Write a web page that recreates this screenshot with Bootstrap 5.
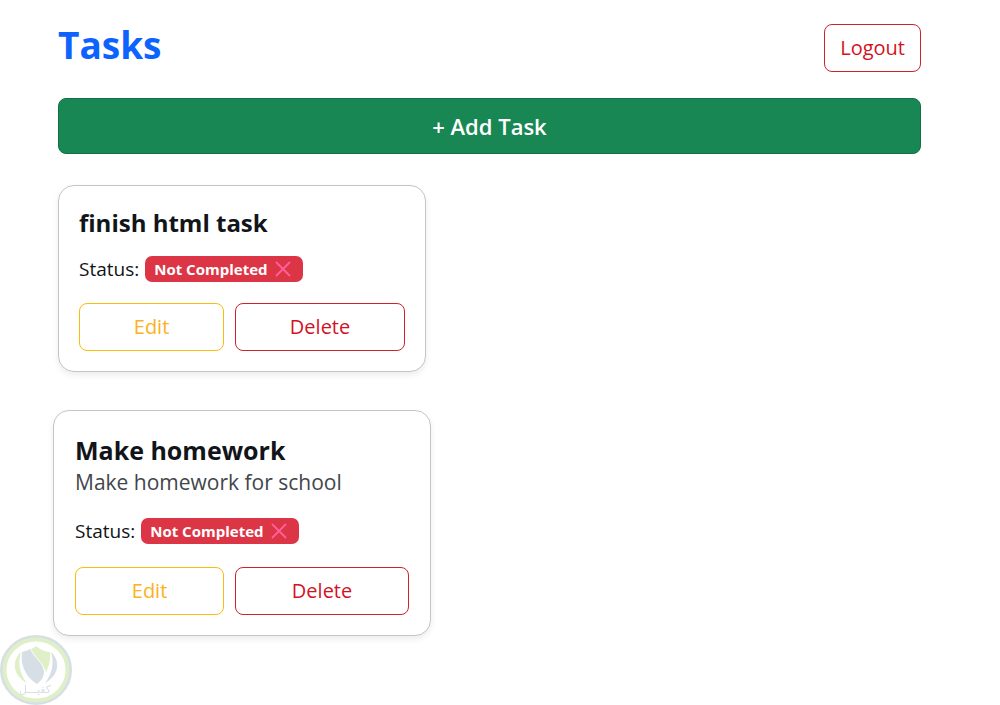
<!DOCTYPE html>
<html lang="en">
<head>
<meta charset="utf-8">
<meta name="viewport" content="width=device-width, initial-scale=1">
<title>Tasks</title>
<link href="https://cdn.jsdelivr.net/npm/bootstrap@5.3.0/dist/css/bootstrap.min.css" rel="stylesheet">
<style>
  body { font-family: "Open Sans", "Noto Sans", sans-serif; font-size: 20px; line-height: 30px; color: #111418; background: #fff; }
  .page { padding: 24px 79px 24px 58px; }
  .page-title { font-size: 37px; line-height: 42px; color: #0d63fd; }
  .btn { --bs-btn-font-size: 20px; --bs-btn-line-height: 30px; --bs-btn-padding-y: 8px; --bs-btn-padding-x: 15px; --bs-btn-border-radius: 8px; }
  .btn-outline-danger { --bs-btn-color: #d3121f; --bs-btn-border-color: #d3202d; }
  .btn-outline-warning { --bs-btn-color: #fdb11c; --bs-btn-border-color: #fdbb10; }
  .btn-success { --bs-btn-bg: #198754; --bs-btn-border-color: #0c7440; --bs-btn-padding-y: 12px; --bs-btn-font-size: 22px; }
  .add-task { margin: 26px 0 31px; }
  .task-list { gap: 38px; }
  .task { width: 368px; max-width: 100%; padding: 20px; border: 1px solid #c4c5c7; border-radius: 16px; box-shadow: 0 3px 6px rgba(0,0,0,.08); }
  .task-title { font-size: 24px; line-height: 34px; }
  .task-text { font-size: 21px; color: #41464c; }
  .task-status { font-size: 19px; margin: 14px 0 19px; gap: 6px; }
  .task-actions { gap: 11px; }
  .status-badge { font-size: 15px; line-height: 16px; gap: 7px; padding: 5px 12px 5px 9px; border-radius: 7px; background: #dc3545; }
  .status-badge svg { width: 16px; height: 16px; }
  .task-raised { width: 378px; margin-left: -5px; padding: 22px 21px 20px; }
  .task-raised .task-title { font-size: 25px; }
  .task-raised .task-status { margin: 19px 0 21px; }
  .watermark { position: fixed; left: 0; bottom: 0; width: 72px; height: 70px; }
</style>
</head>
<body>
<main class="page">
  <header class="d-flex justify-content-between align-items-start">
    <h1 class="page-title fw-bold mb-0">Tasks</h1>
    <button type="button" class="btn btn-outline-danger">Logout</button>
  </header>
  <button type="button" class="btn btn-success w-100 fw-semibold add-task">+ Add Task</button>
  <section class="task-list d-flex flex-column align-items-start">
    <article class="task bg-white">
      <h2 class="task-title fw-bold mb-0">finish html task</h2>
      <p class="task-status d-flex align-items-center">Status:
        <span class="status-badge d-inline-flex align-items-center text-white fw-bold">Not Completed
          <svg viewBox="0 0 16 16" aria-hidden="true"><path d="M1.5 1.5 14.5 14.5M14.5 1.5 1.5 14.5" fill="none" stroke="#ff609c" stroke-width="1.8" stroke-linecap="round"/></svg>
        </span>
      </p>
      <div class="d-flex task-actions">
        <button type="button" class="btn btn-outline-warning flex-fill">Edit</button>
        <button type="button" class="btn btn-outline-danger flex-fill">Delete</button>
      </div>
    </article>
    <article class="task task-raised bg-white">
      <h2 class="task-title fw-bold mb-0">Make homework</h2>
      <p class="task-text mb-0">Make homework for school</p>
      <p class="task-status d-flex align-items-center">Status:
        <span class="status-badge d-inline-flex align-items-center text-white fw-bold">Not Completed
          <svg viewBox="0 0 16 16" aria-hidden="true"><path d="M1.5 1.5 14.5 14.5M14.5 1.5 1.5 14.5" fill="none" stroke="#ff609c" stroke-width="1.8" stroke-linecap="round"/></svg>
        </span>
      </p>
      <div class="d-flex task-actions">
        <button type="button" class="btn btn-outline-warning flex-fill">Edit</button>
        <button type="button" class="btn btn-outline-danger flex-fill">Delete</button>
      </div>
    </article>
  </section>
</main>
<svg class="watermark" viewBox="0 0 72 70" role="img" aria-label="كفيل">
  <ellipse cx="36" cy="35" rx="34.5" ry="33.5" fill="#fff" stroke="#d5dfe5" stroke-width="3"/>
  <ellipse cx="36" cy="35" rx="31.5" ry="30.5" fill="none" stroke="#dff0c8" stroke-width="4"/>
  <path d="M21 17C12 25 12 40 27 48C19 38 18 27 21 17Z" fill="#dff0c8"/>
  <path d="M51 17C60 25 60 40 45 48C53 38 54 27 51 17Z" fill="#d5dfe5"/>
  <path d="M22 17Q27 16 30 14C35 24 44 29 44 37C44 42 41 46 37 49C28 43 20 33 22 17Z" fill="#d5dfe5"/>
  <path d="M31 14Q34 13 36 11Q41 16 50 17C51 25 49 31 46 37C44 29 36 24 31 14Z" fill="#dff0c8"/>
  <text x="35" y="58" text-anchor="middle" font-family="DejaVu Sans" font-size="11" fill="#d5dfe5">كفيـــل</text>
</svg>
<script src="https://cdn.jsdelivr.net/npm/bootstrap@5.3.0/dist/js/bootstrap.bundle.min.js"></script>
</body>
</html>
